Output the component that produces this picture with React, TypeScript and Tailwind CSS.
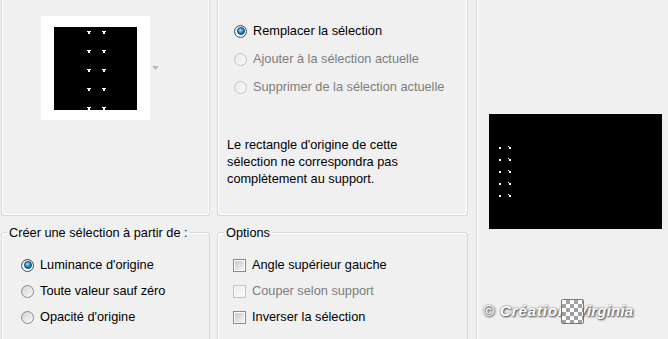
import React from "react";

type Mode = "on" | "off" | "disabled";

function Radio({ mode }: { mode: Mode }) {
  if (mode === "on") {
    return (
      <span className="flex h-[13px] w-[13px] shrink-0 items-center justify-center rounded-full border border-[#3c4b57] bg-[linear-gradient(#e6e6e6,#ffffff)]">
        <span className="h-[8px] w-[8px] rounded-full border border-[#0f3f66] bg-[radial-gradient(circle_at_40%_35%,#aee6ff,#2a8fd0_45%,#0d4d84)]" />
      </span>
    );
  }
  const ring = mode === "off" ? "border-[#8a8a8a] bg-[linear-gradient(135deg,#d2d2d2,#fbfbfb)]" : "border-[#c4c4c4] bg-[linear-gradient(135deg,#e8e8e8,#fbfbfb)]";
  return <span className={`h-[13px] w-[13px] shrink-0 rounded-full border ${ring}`} />;
}

function Check({ disabled }: { disabled?: boolean }) {
  return (
    <span
      className={`flex h-[13px] w-[13px] shrink-0 items-center justify-center border ${
        disabled ? "border-[#c4c4c4] bg-[#f7f7f7]" : "border-[#8a8a8a] bg-white"
      }`}
    >
      <span
        className={`h-[9px] w-[9px] ${
          disabled ? "bg-[linear-gradient(135deg,#ececec,#f9f9f9)]" : "bg-[linear-gradient(135deg,#c9c9c9,#f4f4f4)]"
        }`}
      />
    </span>
  );
}

const sourceOptions: [string, Mode][] = [
  ["Remplacer la sélection", "on"],
  ["Ajouter à la sélection actuelle", "disabled"],
  ["Supprimer de la sélection actuelle", "disabled"],
];

const createFrom: [string, Mode][] = [
  ["Luminance d'origine", "on"],
  ["Toute valeur sauf zéro", "off"],
  ["Opacité d'origine", "off"],
];

const options: [string, boolean][] = [
  ["Angle supérieur gauche", false],
  ["Couper selon support", true],
  ["Inverser la sélection", false],
];

function SmallPreview() {
  const ys = [4, 23, 42, 61, 80];
  return (
    <svg width="83" height="83" viewBox="0 0 83 83" className="block">
      <rect width="83" height="83" fill="#000" />
      {ys.map((y) =>
        [33, 48].map((x) => (
          <g key={`${x}-${y}`} fill="#fff">
            <rect x={x} y={y} width="4" height="1" />
            <rect x={x + 1} y={y + 1} width="2" height="2" />
          </g>
        ))
      )}
    </svg>
  );
}

function BigPreview() {
  const ys = [33, 45, 57, 69, 81];
  return (
    <svg width="173" height="115" viewBox="0 0 173 115" className="block">
      <rect width="173" height="115" fill="#000" />
      {ys.map((y) => (
        <g key={y} fill="#fff">
          <rect x="10" y={y} width="2" height="2" />
          <rect x="19" y={y - 1} width="1" height="1" />
          <rect x="20" y={y} width="2" height="2" />
        </g>
      ))}
    </svg>
  );
}

export default function App() {
  return (
    <div className="flex h-[339px] w-[668px] overflow-hidden bg-[#f0f0f0] font-['Liberation_Sans',Arial,sans-serif] text-[12.75px] leading-[16px] text-black">
      <div className="flex w-[476px] shrink-0 flex-col">
        <div className="flex h-[216px] shrink-0">
          <div className="ml-[1px] flex h-full w-[209px] items-start rounded-b-[3px] border-x border-b border-[#d5d9dc] shadow-[inset_1px_0_0_#fff,inset_-1px_-1px_0_#fff]">
            <div className="ml-[39px] mt-[16px] bg-white pb-[10px] pl-[13px] pr-[13px] pt-[11px]">
              <SmallPreview />
            </div>
            <svg width="7" height="4" viewBox="0 0 7 4" className="ml-[2px] mt-[66px]">
              <path d="M0 0h7L3.5 4z" fill="#b9b9b9" />
            </svg>
          </div>

          <div className="ml-[7px] flex h-full w-[251px] flex-col rounded-b-[3px] border-x border-b border-[#d5d9dc] pl-[9px] pt-[23px] shadow-[inset_1px_0_0_#fff,inset_-1px_-1px_0_#fff]">
            <div className="ml-[7px] flex flex-col gap-[12px]">
              {sourceOptions.map(([label, mode]) => (
                <div key={label} className="flex h-[16px] items-center gap-[6px]">
                  <Radio mode={mode} />
                  <span className={mode === "disabled" ? "text-[#7d7d7d]" : ""}>{label}</span>
                </div>
              ))}
            </div>
            <p className="mt-[41px] w-[220px] leading-[17px]">
              Le rectangle d'origine de cette sélection ne correspondra pas complètement au support.
            </p>
          </div>
        </div>

        <div className="mt-[9px] flex">
          <fieldset className="ml-[1px] h-[200px] w-[209px] rounded-[3px] border border-[#d5d9dc] pl-[19px] shadow-[inset_1px_1px_0_#fff]">
            <legend className="-ml-[14px] px-[2px] leading-[15px]">Créer une sélection à partir de :</legend>
            <div className="mt-[17px] flex flex-col gap-[10px]">
              {createFrom.map(([label, mode]) => (
                <div key={label} className="flex h-[16px] items-center gap-[6px]">
                  <Radio mode={mode} />
                  <span>{label}</span>
                </div>
              ))}
            </div>
          </fieldset>

          <fieldset className="ml-[7px] h-[200px] w-[251px] rounded-[3px] border border-[#d5d9dc] pl-[15px] shadow-[inset_1px_1px_0_#fff]">
            <legend className="-ml-[9px] px-[2px] leading-[15px]">Options</legend>
            <div className="mt-[17px] flex flex-col gap-[10px]">
              {options.map(([label, disabled]) => (
                <div key={label} className="flex h-[16px] items-center gap-[6px]">
                  <Check disabled={disabled} />
                  <span className={disabled ? "text-[#7d7d7d]" : ""}>{label}</span>
                </div>
              ))}
            </div>
          </fieldset>
        </div>
      </div>

      <div className="flex flex-1 flex-col border-l border-[#d5d9dc] shadow-[inset_1px_0_0_#fff]">
        <div className="ml-[12px] mt-[114px]">
          <BigPreview />
        </div>
        <div className="relative ml-[6px] mt-[72px] flex w-fit font-['Liberation_Sans',Arial,sans-serif] text-[15px] font-bold italic leading-[19px] text-white [text-shadow:1px_1px_2px_#444,0_0_2px_#666]">
          <span className="tracking-[0.9px]">© Créations</span>
          <span className="tracking-[0.2px]">Virginia</span>
          <span className="absolute left-[78px] top-[-2px] h-[25px] w-[23px] rounded-[2px] border border-[#6d6d6d] bg-[conic-gradient(#9a9a9a_25%,#ffffff_0_50%,#9a9a9a_0_75%,#ffffff_0)] bg-[length:8px_8px] opacity-90" />
        </div>
      </div>
    </div>
  );
}
